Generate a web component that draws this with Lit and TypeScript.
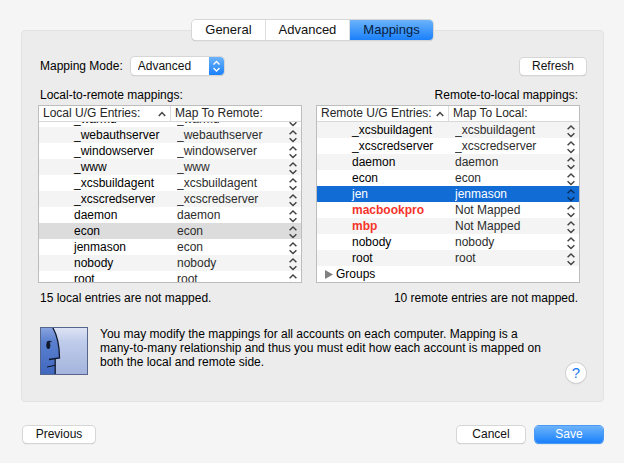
import { LitElement, html, css } from "lit";
import { customElement, property, query } from "lit/decorators.js";
import { classMap } from "lit/directives/class-map.js";

interface Entry {
  name: string;
  target?: string;
  selected?: boolean;
  unmapped?: boolean;
}

const LOCAL: Entry[] = [
  { name: "_warmd", target: "_warmd" },
  { name: "_webauthserver", target: "_webauthserver" },
  { name: "_windowserver", target: "_windowserver" },
  { name: "_www", target: "_www" },
  { name: "_xcsbuildagent", target: "_xcsbuildagent" },
  { name: "_xcscredserver", target: "_xcscredserver" },
  { name: "daemon", target: "daemon" },
  { name: "econ", target: "econ", selected: true },
  { name: "jenmason", target: "econ" },
  { name: "nobody", target: "nobody" },
  { name: "root", target: "root" },
];

const REMOTE: Entry[] = [
  { name: "_xcsbuildagent", target: "_xcsbuildagent" },
  { name: "_xcscredserver", target: "_xcscredserver" },
  { name: "daemon", target: "daemon" },
  { name: "econ", target: "econ" },
  { name: "jen", target: "jenmason", selected: true },
  { name: "macbookpro", target: "Not Mapped", unmapped: true },
  { name: "mbp", target: "Not Mapped", unmapped: true },
  { name: "nobody", target: "nobody" },
  { name: "root", target: "root" },
  { name: "Groups" },
];

@customElement("mapping-table")
export class MappingTable extends LitElement {
  @property({ attribute: false }) entries: Entry[] = [];
  @property() source = "";
  @property() target = "";
  @property({ type: Number }) offset = 0;
  @property({ type: Boolean, reflect: true }) active = false;
  @query(".scroller") scroller!: HTMLElement;

  static styles = css`
    :host {
      display: block;
      min-width: 0;
    }
    .scroller {
      height: 176px;
      overflow: hidden;
      border: 1px solid #bdbdbd;
      background: #fff;
    }
    table {
      width: 100%;
      table-layout: fixed;
      border-spacing: 0;
      font-size: 12px;
      line-height: 16px;
      color: #111;
    }
    th {
      position: sticky;
      top: 0;
      z-index: 1;
      box-sizing: border-box;
      height: 16px;
      padding: 0 4px;
      border-bottom: 1px solid #d8d8d8;
      background: #fff;
      font-weight: 400;
      line-height: 15px;
      text-align: left;
      white-space: nowrap;
      color: #262626;
    }
    th.source {
      width: 132px;
      border-right: 1px solid #dcdcdc;
    }
    .heading {
      display: flex;
      align-items: center;
      justify-content: space-between;
    }
    td {
      height: 16px;
      padding: 0;
      white-space: nowrap;
    }
    tr.tinted td {
      background: #f4f4f4;
    }
    td.name {
      padding-left: 35px;
      color: #000;
    }
    td.group {
      padding-left: 8px;
    }
    .disclosure {
      display: inline-flex;
      align-items: center;
      gap: 3px;
      height: 16px;
      padding: 0;
      border: 0;
      background: none;
      font: inherit;
      color: #000;
      vertical-align: top;
    }
    td.target {
      padding: 0 4px 0 6px;
    }
    .popup {
      display: grid;
      align-items: center;
      height: 16px;
    }
    .popup > * {
      grid-area: 1 / 1;
    }
    .popup svg {
      justify-self: end;
      pointer-events: none;
    }
    select {
      appearance: none;
      width: 100%;
      height: 16px;
      margin: 0;
      padding: 0;
      border: 0;
      background: none;
      font: inherit;
      color: #2c2c2c;
    }
    tr.unmapped .name {
      font-weight: 700;
      color: #f5342b;
    }
    tr.selected td {
      background: #dcdcdc;
    }
    :host([active]) tr.selected td {
      background: #116cd6;
      color: #fff;
    }
    :host([active]) tr.selected select {
      color: #fff;
    }
    svg {
      display: block;
      fill: none;
      stroke: #444;
      stroke-width: 1.5;
    }
    :host([active]) tr.selected svg {
      stroke: #0b2c58;
    }
    svg.triangle {
      fill: #808080;
      stroke: none;
    }
  `;

  firstUpdated() {
    this.scroller.scrollTop = this.offset;
  }

  private row(e: Entry, i: number) {
    const tinted = (i % 2 === 1) === (this.offset > 0);
    if (!e.target) {
      return html`<tr>
        <td class="group" colspan="2">
          <button class="disclosure" aria-expanded="false">
            <svg class="triangle" width="8" height="9" viewBox="0 0 8 9"><path d="M0 0 8 4.5 0 9Z" /></svg>${e.name}
          </button>
        </td>
      </tr>`;
    }
    return html`<tr class=${classMap({ tinted, selected: !!e.selected, unmapped: !!e.unmapped })}>
      <td class="name">${e.name}</td>
      <td class="target">
        <div class="popup">
          <select aria-label=${`${this.target} ${e.name}`}>
            <option>${e.target}</option>
          </select>
          <svg width="8" height="16" viewBox="0 0 8 16">
            <path d="M.6 7.2 4 4 7.4 7.2M.6 11.3 4 14.5 7.4 11.3" />
          </svg>
        </div>
      </td>
    </tr>`;
  }

  render() {
    return html`<div class="scroller">
      <table>
        <thead>
          <tr>
            <th class="source" scope="col" aria-sort="ascending">
              <div class="heading">
                ${this.source}
                <svg width="8" height="6" viewBox="0 0 8 6"><path d="M.8 5 4 1.5 7.2 5" /></svg>
              </div>
            </th>
            <th scope="col">${this.target}</th>
          </tr>
        </thead>
        <tbody>
          ${this.entries.map((e, i) => this.row(e, i))}
        </tbody>
      </table>
    </div>`;
  }
}

@customElement("app-root")
export class AppRoot extends LitElement {
  static styles = css`
    :host {
      display: block;
      box-sizing: border-box;
      min-height: 100vh;
      padding: 20px 20px 19px 21px;
      background: #f5f5f5;
      font: 12px/16px "Liberation Sans", Arial, sans-serif;
      color: #000;
    }
    button,
    select {
      font: inherit;
      color: #111;
    }
    .tabs {
      position: relative;
      display: flex;
      width: max-content;
      margin: 0 auto;
      border-radius: 4px;
      box-shadow: 0 0 0 1px #d6d6d6, 0 1px 1px #a8a8a8;
      overflow: hidden;
      font-size: 13px;
    }
    .tabs button {
      height: 20px;
      padding: 0 13px;
      border: 0;
      border-right: 1px solid #dedede;
      background: #fff;
      line-height: 20px;
    }
    .tabs button.current {
      border: 0;
      background: linear-gradient(#6cb3fa, #1a80fb);
      color: #071c3c;
    }
    .panel {
      margin-top: -10px;
      padding: 26px 17px 26px 16px;
      border: 1px solid #e2e2e2;
      border-radius: 4px;
      background: #ececec;
    }
    .mode {
      display: flex;
      align-items: center;
      gap: 8px;
      padding-left: 2px;
    }
    .mode .push {
      margin-left: auto;
    }
    .picker {
      display: grid;
      width: 93px;
      height: 18px;
      border-radius: 4px;
      background: #fff;
      box-shadow: 0 0 0 1px #d6d6d6, 0 1px 1px #a8a8a8;
      overflow: hidden;
    }
    .picker > * {
      grid-area: 1 / 1;
    }
    .picker select {
      appearance: none;
      width: 100%;
      padding: 0 7px;
      border: 0;
      background: none;
    }
    .picker svg {
      justify-self: end;
      background: linear-gradient(#6cb3fa, #1a80fb);
      pointer-events: none;
    }
    .push {
      box-sizing: border-box;
      height: 17px;
      padding: 0 12px;
      border: 0;
      border-radius: 4px;
      background: #fff;
      box-shadow: 0 0 0 1px #d6d6d6, 0 1px 1px #a8a8a8;
      line-height: 17px;
    }
    .columns {
      display: grid;
      grid-template-columns: 1fr 1fr;
      column-gap: 14px;
      margin: 12px 6px 0 0;
    }
    .columns section {
      min-width: 0;
    }
    h2,
    p {
      margin: 0;
      padding: 0 2px;
      font-size: 12px;
      font-weight: 400;
    }
    h2 {
      margin-bottom: 2px;
    }
    .remote h2,
    .remote p {
      text-align: right;
    }
    .columns p {
      margin-top: 7px;
    }
    .about {
      display: flex;
      gap: 12px;
      margin-top: 21px;
      padding-left: 2px;
    }
    .about p {
      flex: 1;
      max-width: 450px;
      padding: 0;
      line-height: 14px;
    }
    .help {
      flex: none;
      align-self: flex-end;
      width: 20px;
      height: 20px;
      margin: 0 0 -8px auto;
      padding: 0;
      border: 0;
      border-radius: 50%;
      background: #fff;
      box-shadow: 0 0 0 1px #d6d6d6, 0 1px 1px #a8a8a8;
      font-size: 15px;
      line-height: 20px;
      color: #1a7cf0;
    }
    .face {
      flex: none;
    }
    footer {
      display: flex;
      gap: 10px;
      margin-top: 24px;
      padding: 0 1px 0 2px;
    }
    footer .push {
      min-width: 68px;
    }
    footer .previous {
      min-width: 72px;
      margin-right: auto;
    }
    footer .save {
      background: linear-gradient(#6cb3fa, #1a80fb);
      box-shadow: 0 0 0 1px #4a9af5, 0 1px 1px #3e83d8;
      color: #fff;
    }
  `;

  private face() {
    return html`<svg class="face" width="48" height="48" viewBox="0 0 48 48" role="img" aria-label="Finder">
      <defs>
        <linearGradient id="sky" x1="0" y1="0" x2="0" y2="1">
          <stop offset="0" stop-color="#dfe5f4" />
          <stop offset=".3" stop-color="#c0cceb" />
          <stop offset="1" stop-color="#a3b3dc" />
        </linearGradient>
        <linearGradient id="skin" x1="0" y1="0" x2="0" y2="1">
          <stop offset="0" stop-color="#8ba6e0" />
          <stop offset=".3" stop-color="#5b80cf" />
          <stop offset="1" stop-color="#3f67be" />
        </linearGradient>
      </defs>
      <rect width="48" height="48" fill="url(#sky)" />
      <path d="M0 0H12.5C17 8 19.5 20 19.5 31L15 32V48H0Z" fill="url(#skin)" />
      <path d="M12.5 0C17 8 19.5 20 19.5 31L9 32.5M15.2 32V48" fill="none" stroke="#10182c" stroke-width="1.3" />
      <path d="M7 40Q11 39.5 15 38.3M7 15.5Q9 13.5 11.5 14.8" fill="none" stroke="#10182c" stroke-width="1.2" />
      <ellipse cx="8.3" cy="18.3" rx="2" ry="3.8" fill="#10182c" />
      <rect x=".5" y=".5" width="47" height="47" fill="none" stroke="#56658c" />
    </svg>`;
  }

  render() {
    return html`
      <nav class="tabs" role="tablist">
        <button role="tab" aria-selected="false">General</button>
        <button role="tab" aria-selected="false">Advanced</button>
        <button role="tab" aria-selected="true" class="current">Mappings</button>
      </nav>
      <main class="panel">
        <div class="mode">
          <label for="mode">Mapping Mode:</label>
          <div class="picker">
            <select id="mode"><option>Advanced</option></select>
            <svg width="15" height="18" viewBox="0 0 15 18" fill="none" stroke="#fff" stroke-width="1.3">
              <path d="M4.5 7.5 7.5 4.5 10.5 7.5M4.5 11 7.5 14 10.5 11" />
            </svg>
          </div>
          <button class="push">Refresh</button>
        </div>
        <div class="columns">
          <section>
            <h2>Local-to-remote mappings:</h2>
            <mapping-table .entries=${LOCAL} source="Local U/G Entries:" target="Map To Remote:" offset="11"></mapping-table>
            <p>15 local entries are not mapped.</p>
          </section>
          <section class="remote">
            <h2>Remote-to-local mappings:</h2>
            <mapping-table .entries=${REMOTE} source="Remote U/G Entries:" target="Map To Local:" active></mapping-table>
            <p>10 remote entries are not mapped.</p>
          </section>
        </div>
        <div class="about">
          ${this.face()}
          <p>
            You may modify the mappings for all accounts on each computer. Mapping is a many-to-many relationship and
            thus you must edit how each account is mapped on both the local and remote side.
          </p>
          <button class="help" aria-label="Help">?</button>
        </div>
      </main>
      <footer>
        <button class="push previous">Previous</button>
        <button class="push">Cancel</button>
        <button class="push save">Save</button>
      </footer>
    `;
  }
}
